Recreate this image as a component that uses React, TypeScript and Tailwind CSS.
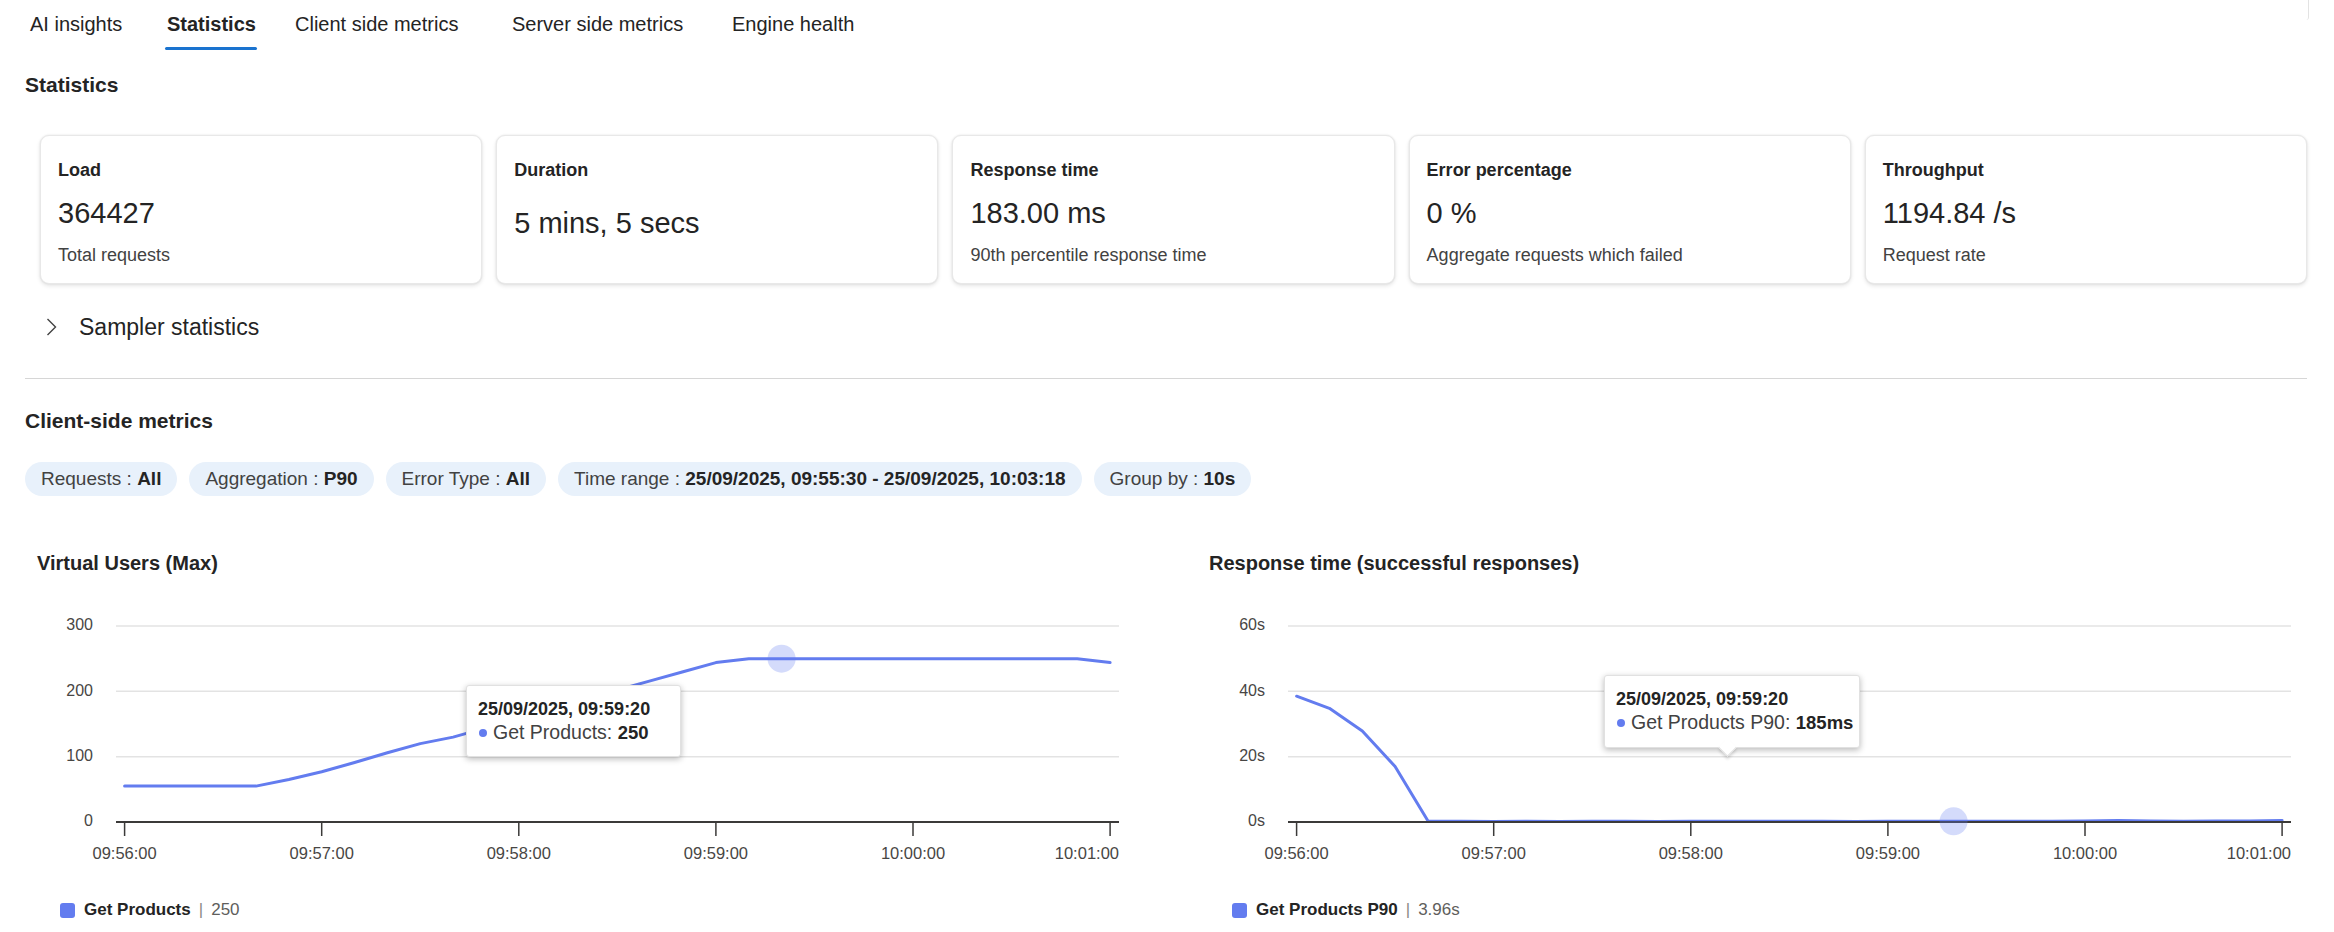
import React from 'react';

// tab widths keep the label starts where the reference puts them
const tabs = [
  { label: 'AI insights', w: 'w-[137px]' },
  { label: 'Statistics', w: 'w-[128px]' },
  { label: 'Client side metrics', w: 'w-[217px]' },
  { label: 'Server side metrics', w: 'w-[220px]' },
  { label: 'Engine health', w: 'w-auto' },
];

const cards = [
  { title: 'Load', value: '364427', sub: 'Total requests' },
  { title: 'Duration', value: '5 mins, 5 secs', sub: '' },
  { title: 'Response time', value: '183.00 ms', sub: '90th percentile response time' },
  { title: 'Error percentage', value: '0 %', sub: 'Aggregate requests which failed' },
  { title: 'Throughput', value: '1194.84 /s', sub: 'Request rate' },
];

const chips = [
  { label: 'Requests', value: 'All' },
  { label: 'Aggregation', value: 'P90' },
  { label: 'Error Type', value: 'All' },
  { label: 'Time range', value: '25/09/2025, 09:55:30 - 25/09/2025, 10:03:18' },
  { label: 'Group by', value: '10s' },
];

// 10s buckets from 09:56:00 to 10:01:00
const vuData = [
  55, 55, 55, 55, 55, 65, 77, 91, 106, 120, 130, 144, 159, 173, 188, 202, 216, 230, 244, 250, 250, 250, 250, 250, 250,
  250, 250, 250, 250, 250, 244,
];
const rtData = [
  38.5, 34.8, 27.9, 17, 0.3, 0.2, 0.19, 0.22, 0.18, 0.2, 0.21, 0.19, 0.23, 0.2, 0.22, 0.25, 0.2, 0.19, 0.21, 0.2, 0.2,
  0.22, 0.24, 0.21, 0.35, 0.5, 0.3, 0.25, 0.35, 0.3, 0.45,
];

const xTicks = ['09:56:00', '09:57:00', '09:58:00', '09:59:00', '10:00:00', '10:01:00'];

const X = (t: number) => 99.6 + (t / 60) * 197.1;

function Chart({ data, max, yLabels, color = '#637cef' }: { data: number[]; max: number; yLabels: string[]; color?: string }) {
  const Y = (v: number) => 222 - (v / max) * 196;
  const d = data.map((v, i) => `${i ? 'L' : 'M'}${X(i * 10).toFixed(1)},${Y(v).toFixed(1)}`).join(' ');
  const hi = data[20];
  return (
    <svg width={1110} height={275} className="block">
      {yLabels.map((l, i) => {
        const y = 222 - (i / (yLabels.length - 1)) * 196;
        return (
          <g key={l}>
            {i > 0 && <line x1={91} x2={1094} y1={y} y2={y} stroke="#e3e3e3" strokeWidth={1.5} />}
            <text x={68} y={y} textAnchor="end" dominantBaseline="middle" fontSize={16} fill="#484644">
              {l}
            </text>
          </g>
        );
      })}
      <path d={d} fill="none" stroke={color} strokeWidth={3} strokeLinejoin="round" strokeLinecap="round" />
      <line x1={91} x2={1094} y1={222} y2={222} stroke="#3b3a39" strokeWidth={2} />
      {xTicks.map((t, i) => {
        const x = X(i * 60);
        const last = i === xTicks.length - 1;
        return (
          <g key={t}>
            <line x1={x} x2={x} y1={222} y2={236} stroke="#3b3a39" strokeWidth={1.5} />
            <text
              x={last ? 1094 : x}
              y={255}
              textAnchor={last ? 'end' : 'middle'}
              dominantBaseline="middle"
              fontSize={16.5}
              fill="#484644"
            >
              {t}
            </text>
          </g>
        );
      })}
      <circle cx={X(200)} cy={Y(hi)} r={14} fill={color} fillOpacity={0.28} />
    </svg>
  );
}

function Tooltip({ label, value, arrow }: { label: string; value: string; arrow?: boolean }) {
  return (
    <div className="relative h-full w-full rounded-[3px] border border-[#e1e1e1] bg-white pt-[12px] pl-[11px] shadow-[0_2px_6px_rgba(0,0,0,0.28)]">
      <div className="text-[18px] leading-[23px] font-bold text-[#242424]">25/09/2025, 09:59:20</div>
      <div className="flex items-center text-[19.5px] leading-[23px] text-[#424242]">
        <span className="mr-[6px] ml-[1px] h-[8px] w-[8px] rounded-full bg-[#637cef]" />
        <span>{label}:&nbsp;</span>
        <span className="text-[18.5px] font-bold text-[#242424]">{value}</span>
      </div>
      {arrow && (
        <div className="absolute -bottom-[7px] left-[116px] h-[13px] w-[13px] rotate-45 border-r border-b border-[#e1e1e1] bg-white shadow-[2px_2px_3px_rgba(0,0,0,0.15)]" />
      )}
    </div>
  );
}

function Legend({ name, value }: { name: string; value: string }) {
  return (
    <div className="mt-[23px] flex items-center pl-[35px] text-[17px] leading-[24px]">
      <span className="mr-[9px] h-[15px] w-[15px] rounded-[3px] bg-[#637cef]" />
      <span className="font-bold text-[#242424]">{name}</span>
      <span className="mx-[8px] text-[#8a8886]">|</span>
      <span className="text-[#605e5c]">{value}</span>
    </div>
  );
}

export default function App() {
  return (
    <div className="relative h-[932px] w-[2334px] overflow-hidden bg-white font-['Liberation_Sans',Arial,sans-serif] text-[#242424]">
      {/* edge of a panel above, scrolled off */}
      <div className="absolute top-0 left-[2306px] h-[20px] w-[3px] rounded-br-[4px] border-r border-[#e3e3e3]" />

      {/* Tabs */}
      <div className="flex h-[52px] pt-[11px] pl-[30px]">
        {tabs.map(t => (
          <div key={t.label} className={`${t.w} shrink-0`}>
            <div
              className={`relative inline-block text-[20px] leading-[26px] ${t.label === 'Statistics' ? 'font-bold' : 'font-normal'}`}
            >
              {t.label}
              {t.label === 'Statistics' && (
                <div className="absolute top-[36px] -right-[1px] -left-[2px] h-[3px] rounded-full bg-[#1a73cf]" />
              )}
            </div>
          </div>
        ))}
      </div>

      <div className="pr-[27px] pl-[25px]">
        <h2 className="mt-[19px] text-[21px] leading-[28px] font-bold">Statistics</h2>

        {/* KPI cards */}
        <div className="mt-[36px] ml-[15px] flex gap-[14px]">
          {cards.map(c => (
            <div
              key={c.title}
              className="h-[149px] flex-1 rounded-[9px] border border-[#e8e8e8] bg-white pt-[22px] pl-[17px] shadow-[0_0_2px_rgba(0,0,0,0.10),0_2px_4px_rgba(0,0,0,0.10)]"
            >
              <div className="text-[18px] leading-[24px] font-bold text-[#242424]">{c.title}</div>
              <div className={`text-[29px] leading-[36px] text-[#242424] ${c.sub ? 'mt-[13px]' : 'mt-[23px]'}`}>
                {c.value}
              </div>
              {c.sub && <div className="mt-[12px] text-[18px] leading-[24px] text-[#424242]">{c.sub}</div>}
            </div>
          ))}
        </div>

        {/* Sampler statistics */}
        <div className="mt-[29px] flex h-[28px] items-center pl-[21px]">
          <svg width="12" height="18" viewBox="0 0 12 18" className="mr-[21px]">
            <polyline points="1.5,1 9.5,9 1.5,17" fill="none" stroke="#424242" strokeWidth="1.4" />
          </svg>
          <span className="text-[23px] leading-[28px] text-[#242424]">Sampler statistics</span>
        </div>

        <div className="mt-[37px] h-px bg-[#d6d6d6]" />

        <h2 className="mt-[28px] text-[21px] leading-[28px] font-bold">Client-side metrics</h2>

        {/* Filter chips */}
        <div className="mt-[27px] flex gap-[12px]">
          {chips.map(c => (
            <div
              key={c.label}
              className="flex h-[34px] items-center rounded-full bg-[#e8f1fb] px-[16px] text-[19px] text-[#424242]"
            >
              {c.label} :&nbsp;<span className="font-bold text-[#242424]">{c.value}</span>
            </div>
          ))}
        </div>

        {/* Charts */}
        <div className="mt-[54px] grid grid-cols-2 gap-[62px]">
          <div>
            <div className="pl-[12px] text-[20px] leading-[26px] font-bold">Virtual Users (Max)</div>
            <div className="relative mt-[24px]">
              <Chart data={vuData} max={300} yLabels={['0', '100', '200', '300']} />
              <div className="absolute top-[85px] left-[441px] h-[72px] w-[215px]">
                <Tooltip label="Get Products" value="250" />
              </div>
            </div>
            <Legend name="Get Products" value="250" />
          </div>
          <div>
            <div className="pl-[12px] text-[20px] leading-[26px] font-bold">Response time (successful responses)</div>
            <div className="relative mt-[24px]">
              <Chart data={rtData} max={60} yLabels={['0s', '20s', '40s', '60s']} />
              <div className="absolute top-[75px] left-[407px] h-[73px] w-[256px]">
                <Tooltip label="Get Products P90" value="185ms" arrow />
              </div>
            </div>
            <Legend name="Get Products P90" value="3.96s" />
          </div>
        </div>
      </div>
    </div>
  );
}
